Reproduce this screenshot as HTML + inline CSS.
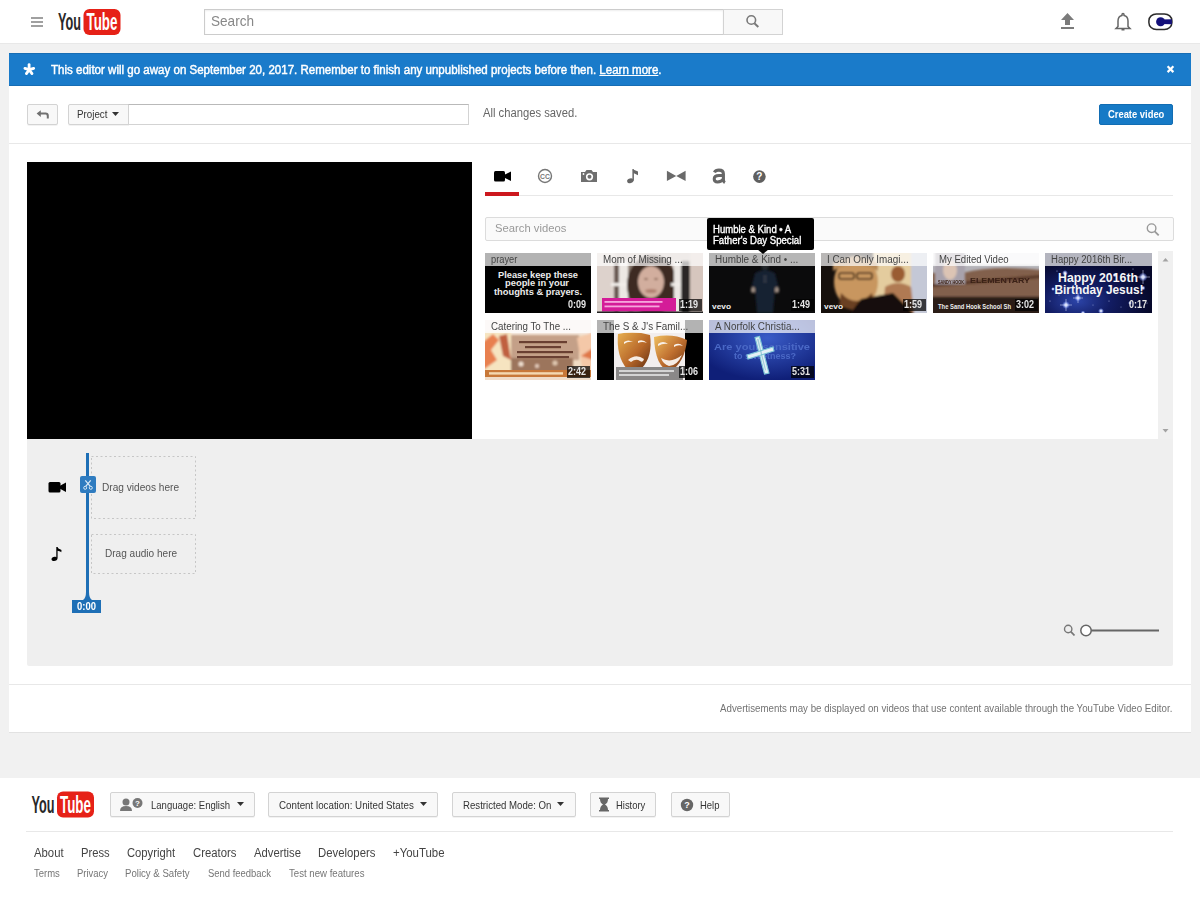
<!DOCTYPE html>
<html><head><meta charset="utf-8">
<style>
*{box-sizing:border-box;margin:0;padding:0}
html,body{width:1200px;height:906px;overflow:hidden}
body{position:relative;background:#f1f1f1;font-family:"Liberation Sans",sans-serif;color:#333}
.abs{position:absolute}
#hdr{left:0;top:0;width:1200px;height:44px;background:#fff;border-bottom:1px solid #e8e8e8}
#banner{left:9px;top:53px;width:1182px;height:33px;background:#1a7bca;border-top:1px solid #176db4;border-bottom:1px solid #176db4}
#panel{left:9px;top:86px;width:1182px;height:647px;background:#fff;border-bottom:1px solid #e2e2e2}
#foot{left:0;top:778px;width:1200px;height:128px;background:#fff}
.btn{position:absolute;background:#f8f8f8;border:1px solid #d3d3d3;border-radius:2px;box-shadow:0 1px 0 rgba(0,0,0,.05)}
.txt{position:absolute;white-space:nowrap;line-height:1;transform-origin:0 0}
svg{position:absolute;overflow:visible}
</style></head>
<body>
<!-- HEADER -->
<div id="hdr" class="abs"></div>
<div class="abs" style="left:31px;top:17px;width:12px;height:1.5px;background:#a0a0a0"></div>
<div class="abs" style="left:31px;top:21px;width:12px;height:1.5px;background:#a0a0a0"></div>
<div class="abs" style="left:31px;top:25px;width:12px;height:1.5px;background:#a0a0a0"></div>
<svg style="left:56px;top:8px" width="68" height="28" viewBox="0 0 68 28">
 <rect x="27.5" y="1" width="37" height="26" rx="6" fill="#e62117"/>
 <text x="2" y="22" font-family="Liberation Sans" font-weight="bold" font-size="23" fill="#282828" textLength="23" lengthAdjust="spacingAndGlyphs">You</text>
 <text x="30.5" y="22" font-family="Liberation Sans" font-weight="bold" font-size="23" fill="#fff" textLength="31" lengthAdjust="spacingAndGlyphs">Tube</text>
</svg>
<div class="abs" style="left:204px;top:9px;width:520px;height:26px;background:#fff;border:1px solid #ccc;box-shadow:inset 0 1px 2px #eee"></div>
<div class="txt" style="left:210.5px;top:14.4px;font-size:14.5px;color:#888;transform:scaleX(.937)">Search</div>
<div class="abs" style="left:723px;top:9px;width:60px;height:26px;background:#f8f8f8;border:1px solid #d3d3d3"></div>
<svg style="left:740px;top:10px" width="24" height="24" viewBox="0 0 24 24">
 <circle cx="11.3" cy="10" r="4.3" fill="none" stroke="#7a7a7a" stroke-width="1.6"/>
 <line x1="14.4" y1="13.2" x2="18.3" y2="17" stroke="#7a7a7a" stroke-width="2"/>
</svg>
<svg style="left:1058px;top:10px" width="20" height="22" viewBox="0 0 20 22">
 <path d="M9.5 3 L16 10 L12 10 L12 15 L7 15 L7 10 L3 10 Z" fill="#7b7b7b"/>
 <rect x="3" y="17" width="13" height="2" fill="#7b7b7b"/>
</svg>
<svg style="left:1112px;top:11px" width="22" height="22" viewBox="0 0 22 22">
 <path d="M11 2.5 a1 1 0 0 1 1 1 v1 c2.6 .6 4 2.8 4 5.5 v5.5 l2 2 H4 l2-2 V10 c0-2.7 1.4-4.9 4-5.5 v-1 a1 1 0 0 1 1-1z" fill="none" stroke="#666" stroke-width="1.5"/>
 <rect x="9.5" y="18" width="3" height="1.5" fill="#666"/>
</svg>
<svg style="left:1146px;top:12px" width="28" height="19" viewBox="0 0 28 19">
 <rect x="2.9" y="1.9" width="23" height="15.6" rx="7.5" ry="6.8" fill="#fff" stroke="#2a2a2a" stroke-width="1.5"/>
 <circle cx="14.6" cy="9.8" r="4.5" fill="#14107a"/>
 <path d="M14.6 7.6 L25.9 7.3 L25.9 12.3 L14.6 12Z" fill="#14107a"/>
</svg>

<!-- BANNER -->
<div id="banner" class="abs"></div>
<svg style="left:18px;top:58px" width="24" height="24" viewBox="0 0 24 24">
 <g stroke="#fff" stroke-width="2.8" stroke-linecap="round">
  <line x1="11.1" y1="11.7" x2="11.1" y2="6.6"/><line x1="11.1" y1="11.7" x2="6.9" y2="10.4"/><line x1="11.1" y1="11.7" x2="15.7" y2="10.4"/><line x1="11.1" y1="11.7" x2="8.4" y2="15.6"/><line x1="11.1" y1="11.7" x2="14" y2="15.6"/>
 </g></svg>
<div class="txt" style="left:51px;top:63.5px;font-size:12.5px;color:#fff;-webkit-text-stroke:.45px #fff;transform:scaleX(.923)">This editor will go away on September 20, 2017. Remember to finish any unpublished projects before then. <span style="text-decoration:underline">Learn more</span>.</div>
<svg style="left:1160px;top:60px" width="20" height="20" viewBox="0 0 20 20">
 <g stroke="#fff" stroke-width="2.2"><line x1="7.6" y1="6.3" x2="13.4" y2="12.1"/><line x1="13.4" y1="6.3" x2="7.6" y2="12.1"/></g></svg>

<!-- PANEL -->
<div id="panel" class="abs"></div>
<div class="btn" style="left:27px;top:104px;width:31px;height:21px"></div>
<svg style="left:35px;top:109px" width="16" height="12" viewBox="0 0 16 12">
 <path d="M1.6 4.6 L5.8 1.3 V3.6 H10.6 Q13.8 3.6 13.8 6.6 V9.4 H11.8 V7 Q11.8 5.6 10.4 5.6 H5.8 V7.9Z" fill="#707070"/>
</svg>
<div class="btn" style="left:68px;top:104px;width:61px;height:21px;border-radius:2px 0 0 2px"></div>
<div class="txt" style="left:77px;top:108.7px;font-size:11px;color:#333;transform:scaleX(.889)">Project</div>
<svg style="left:112px;top:112px" width="8" height="5" viewBox="0 0 8 5"><path d="M0 0H7L3.5 4Z" fill="#333"/></svg>
<div class="abs" style="left:128px;top:104px;width:341px;height:21px;background:#fff;border:1px solid #d3d3d3;border-top-color:#b9b9b9"></div>
<div class="txt" style="left:482.5px;top:107.3px;font-size:12px;color:#666;transform:scaleX(.936)">All changes saved.</div>
<div class="abs" style="left:1099px;top:104px;width:74px;height:21px;background:#167ac6;border:1px solid #126db3;border-radius:2px"></div>
<div class="txt" style="left:1107.5px;top:109.4px;font-size:10.5px;font-weight:bold;color:#fff;transform:scaleX(.894)">Create video</div>
<div class="abs" style="left:9px;top:143px;width:1182px;height:1px;background:#e8e8e8"></div>
<!-- EDITOR -->
<div class="abs" style="left:27px;top:162px;width:445px;height:276.5px;background:#000"></div>
<!-- tabs -->
<svg style="left:492px;top:169px" width="22" height="15" viewBox="0 0 22 15">
 <rect x="2" y="2" width="11" height="10.5" rx="1.5" fill="#000"/>
 <path d="M12 6 L19 2.5 L19 12 L12 8.5Z" fill="#000"/>
</svg>
<svg style="left:536px;top:167px" width="18" height="18" viewBox="0 0 18 18">
 <circle cx="9" cy="9" r="6.5" fill="none" stroke="#777" stroke-width="1.4"/>
 <text x="9" y="11.6" font-family="Liberation Sans" font-weight="bold" font-size="6.8" fill="#777" text-anchor="middle">CC</text>
</svg>
<svg style="left:579px;top:167px" width="20" height="17" viewBox="0 0 20 17">
 <path d="M2 5 H6 L7.5 3 H12.5 L14 5 H18 V15 H2Z" fill="#6f6f6f"/>
 <circle cx="10.5" cy="9.8" r="3.6" fill="#fff"/>
 <circle cx="10.5" cy="9.8" r="2" fill="#6f6f6f"/>
 <circle cx="4.5" cy="7" r="0.9" fill="#fff"/>
</svg>
<svg style="left:624px;top:167px" width="18" height="18" viewBox="0 0 18 18">
 <rect x="8.4" y="2.2" width="1.5" height="11.5" fill="#666"/>
 <path d="M8.6 2.2 L14 4.4 L14 8.2 L9.4 5.9Z" fill="#666"/>
 <ellipse cx="6.3" cy="13.8" rx="3.2" ry="2.3" transform="rotate(-15 6.3 13.8)" fill="#666"/>
</svg>
<svg style="left:665px;top:168px" width="22" height="16" viewBox="0 0 22 16">
 <path d="M1.9 2.75 L11.25 7.9 L1.9 13Z M20.6 2.75 L11.25 7.9 L20.6 13Z" fill="#6a6a6a"/>
</svg>
<svg style="left:711px;top:167px" width="17" height="18" viewBox="0 0 17 18">
 <path d="M3.4 5.4 Q4.6 3.1 7.9 3.1 Q12.4 3.1 12.4 7 V13 Q12.4 14.8 13.9 15.7" fill="none" stroke="#676767" stroke-width="3.1"/>
 <path d="M12.4 8.6 H8 Q3.2 8.6 3.2 12.1 Q3.2 15 6.5 15 Q10.5 15 12.4 12.2" fill="none" stroke="#676767" stroke-width="3"/>
</svg>
<svg style="left:752px;top:170px" width="15" height="15" viewBox="0 0 15 15">
 <circle cx="7.4" cy="6.6" r="6.3" fill="#5f5f5f"/>
 <text x="7.4" y="10.2" font-family="Liberation Sans" font-weight="bold" font-size="10" fill="#fff" text-anchor="middle">?</text>
</svg>
<div class="abs" style="left:485px;top:195px;width:688px;height:1px;background:#e8e8e8"></div>
<div class="abs" style="left:485px;top:192px;width:34px;height:4px;background:#cc181e"></div>
<!-- search videos -->
<div class="abs" style="left:485px;top:217px;width:689px;height:24px;background:#fafafa;border:1px solid #dcdcdc;border-radius:2px"></div>
<div class="txt" style="left:494.5px;top:222.9px;font-size:11.5px;color:#999;transform:scaleX(.978)">Search videos</div>
<svg style="left:1142px;top:219px" width="22" height="22" viewBox="0 0 22 22">
 <circle cx="9.6" cy="9.2" r="4.3" fill="none" stroke="#999" stroke-width="1.4"/>
 <line x1="12.7" y1="12.3" x2="16.7" y2="16.3" stroke="#999" stroke-width="1.8"/>
</svg>
<!-- scrollbar -->
<div class="abs" style="left:1158px;top:251px;width:15px;height:188px;background:#f0f0f0"></div>
<svg style="left:1158px;top:251px" width="15" height="188" viewBox="0 0 15 188">
 <path d="M4.5 10.5 L7.5 7 L10.5 10.5Z" fill="#a3a3a3"/>
 <path d="M4.5 178 L7.5 181.5 L10.5 178Z" fill="#a3a3a3"/>
</svg>
<!-- THUMBNAILS -->
<style>svg.th{overflow:hidden}</style>
<svg style="left:0;top:0" width="0" height="0"><defs>
 <filter id="b1" x="-5%" y="-5%" width="110%" height="110%"><feGaussianBlur stdDeviation="0.9"/></filter>
 <filter id="b2" x="-5%" y="-5%" width="110%" height="110%"><feGaussianBlur stdDeviation="1.6"/></filter>
 <filter id="b05"><feGaussianBlur stdDeviation="0.45"/></filter>
 <radialGradient id="sky" cx="30%" cy="80%" r="70%"><stop offset="0" stop-color="#2c44a8"/><stop offset=".45" stop-color="#121c62"/><stop offset="1" stop-color="#06082a"/></radialGradient>
 <radialGradient id="bl" cx="55%" cy="30%" r="70%"><stop offset="0" stop-color="#3a5cc8"/><stop offset="1" stop-color="#0f1f78"/></radialGradient>
 <radialGradient id="star"><stop offset="0" stop-color="#fff"/><stop offset=".35" stop-color="#c8d4ff" stop-opacity=".9"/><stop offset="1" stop-color="#6080ff" stop-opacity="0"/></radialGradient>
</defs></svg>
<svg class="th" style="left:485px;top:253px" width="106" height="60" viewBox="0 0 106 60">
 <rect width="106" height="60" fill="#000"/>
 <g font-family="Liberation Sans" font-weight="bold" font-size="8.6" fill="#ececec" text-anchor="middle">
  <text x="53" y="24.5" textLength="80" lengthAdjust="spacingAndGlyphs">Please keep these</text>
  <text x="52" y="33" textLength="64" lengthAdjust="spacingAndGlyphs">people in your</text>
  <text x="53" y="41.5" textLength="88" lengthAdjust="spacingAndGlyphs">thoughts &amp; prayers.</text>
 </g>
</svg>
<svg class="th" style="left:597px;top:253px" width="106" height="60" viewBox="0 0 106 60">
 <rect width="106" height="60" fill="#c9bcb6"/>
 <g filter="url(#b1)">
 <rect x="-2" y="-2" width="20" height="64" fill="#ddd2cc"/>
 <rect x="17" y="8" width="5" height="52" fill="#6a5a52"/>
 <rect x="22" y="8" width="9" height="52" fill="#ece8e4"/>
 <rect x="14" y="30" width="18" height="3" fill="#f2eeea"/>
 <rect x="31" y="8" width="5" height="52" fill="#8a7a70"/>
 <ellipse cx="55" cy="32" rx="25" ry="30" fill="#3c2a22"/>
 <ellipse cx="54" cy="29" rx="13" ry="16" fill="#d2ae9e"/>
 <ellipse cx="54" cy="38" rx="6" ry="2" fill="#b08070"/>
 <ellipse cx="49" cy="26" rx="2" ry="1" fill="#8a6a5a"/><ellipse cx="59" cy="26" rx="2" ry="1" fill="#8a6a5a"/>
 <rect x="77" y="8" width="7" height="52" fill="#ebe7e3"/>
 <rect x="74" y="30" width="14" height="3" fill="#f0ece8"/>
 <rect x="84" y="8" width="9" height="52" fill="#2c2626"/>
 <rect x="93" y="-2" width="15" height="64" fill="#d6c6be"/>
 </g>
 <rect x="5" y="45" width="74" height="13.5" fill="#d41c98"/>
 <g filter="url(#b05)" fill="#f6a6dc">
 <rect x="7.5" y="48" width="58" height="1.8"/>
 <rect x="7.5" y="52.5" width="55" height="1.8"/>
 </g>
 <rect x="0" y="58.5" width="106" height="1.5" fill="#222"/>
</svg>
<svg class="th" style="left:709px;top:253px" width="106" height="60" viewBox="0 0 106 60">
 <rect width="106" height="60" fill="#0b0b0c"/>
 <g filter="url(#b1)">
 <path d="M46 20 Q56 14 66 20 L70 36 L66 38 L64 60 L48 60 L46 38 L42 36Z" fill="#182030"/>
 <circle cx="56" cy="13" r="4" fill="#22252c"/>
 <ellipse cx="44" cy="37" rx="2.2" ry="3" fill="#9a8a80"/>
 <ellipse cx="68" cy="37" rx="2.2" ry="3" fill="#9a8a80"/>
 <rect x="54" y="22" width="4" height="8" fill="#2a3040"/>
 </g>
 <text x="3" y="56" font-family="Liberation Sans" font-weight="bold" font-size="7.5" fill="#f0f0f0" textLength="19" lengthAdjust="spacingAndGlyphs">vevo</text>
</svg>
<svg class="th" style="left:821px;top:253px" width="106" height="60" viewBox="0 0 106 60">
 <rect width="106" height="60" fill="#16100c"/>
 <g filter="url(#b1)">
 <rect x="52" y="-2" width="44" height="50" fill="#e4cc9e"/>
 <rect x="90" y="-2" width="18" height="64" fill="#c4c8d6"/>
 <ellipse cx="77" cy="21" rx="7" ry="8" fill="#9a5c30"/>
 <path d="M64 34 Q77 26 90 34 L93 60 L62 60Z" fill="#b07a52"/>
 <ellipse cx="35" cy="29" rx="22" ry="26" fill="#c8965e"/>
 <path d="M12 18 Q35 4 57 18 L57 10 Q35 -2 12 10Z" fill="#b88a58"/>
 <rect x="18" y="20" width="15" height="6" rx="2" fill="none" stroke="#3a2414" stroke-width="1.6"/>
 <rect x="36" y="20" width="15" height="6" rx="2" fill="none" stroke="#3a2414" stroke-width="1.6"/>
 <path d="M20 40 Q35 56 51 40 L53 52 Q35 62 18 52Z" fill="#6a4020"/>
 <path d="M28 62 L40 46 L72 40 L94 62Z" fill="#14100c"/>
 </g>
 <text x="3" y="56" font-family="Liberation Sans" font-weight="bold" font-size="7.5" fill="#f0f0f0" textLength="19" lengthAdjust="spacingAndGlyphs">vevo</text>
</svg>
<svg class="th" style="left:933px;top:253px" width="106" height="60" viewBox="0 0 106 60">
 <rect width="106" height="60" fill="#82604c"/>
 <g filter="url(#b1)">
 <rect x="-2" y="-2" width="110" height="16" fill="#eeeef0"/>
 <path d="M-2 12 L108 12 L108 17 Q60 12 30 20 L-2 20Z" fill="#b4b2b8"/>
 <path d="M-2 31 L108 22 L108 25 L-2 34Z" fill="#5a3a2a"/>
 <rect x="2" y="-2" width="30" height="33" fill="#a8a2ac"/>
 <ellipse cx="17" cy="17" rx="7" ry="10" fill="#dcc4b4"/>
 <rect x="-2" y="44" width="110" height="18" fill="#2c1c16"/>
 </g>
 <g filter="url(#b05)">
 <text x="5" y="31" font-family="Liberation Sans" font-weight="bold" font-size="5" fill="#3a2015" textLength="26" lengthAdjust="spacingAndGlyphs">SANDY HOOK</text>
 <text x="37" y="30" font-family="Liberation Sans" font-weight="bold" font-size="6.5" fill="#3a2015" textLength="60" lengthAdjust="spacingAndGlyphs">ELEMENTARY</text>
 </g>
 <text x="5" y="56" font-family="Liberation Sans" font-weight="bold" font-size="7" fill="#ececec" textLength="73" lengthAdjust="spacingAndGlyphs">The Sand Hook School Sh</text>
</svg>
<svg class="th" style="left:1045px;top:253px" width="107" height="60" viewBox="0 0 107 60">
 <rect width="107" height="60" fill="url(#sky)"/>
 <g fill="#b8c4f0" opacity=".8">
  <circle cx="12" cy="18" r=".6"/><circle cx="30" cy="24" r=".5"/><circle cx="88" cy="16" r=".6"/><circle cx="64" cy="48" r=".6"/><circle cx="76" cy="54" r=".5"/><circle cx="5" cy="48" r=".6"/><circle cx="48" cy="52" r=".5"/><circle cx="102" cy="50" r=".6"/><circle cx="90" cy="40" r=".5"/><circle cx="14" cy="42" r=".5"/>
 </g>
 <g fill="url(#star)">
  <circle cx="21" cy="52" r="4"/><circle cx="33" cy="45" r="3.5"/><circle cx="98" cy="24" r="4.5"/><circle cx="98" cy="35" r="2.5"/><circle cx="20" cy="20" r="3"/><circle cx="56" cy="58" r="3"/><circle cx="38" cy="60" r="2.5"/><circle cx="85" cy="50" r="2"/><circle cx="8" cy="36" r="2"/><circle cx="70" cy="22" r="2.5"/>
 </g>
 <g stroke="#dfe6ff" stroke-width=".6" opacity=".85">
  <path d="M21 46 V58 M15 52 H27"/><path d="M98 17 V31 M91 24 H105"/><path d="M33 40 V50 M28 45 H38"/>
 </g>
 <g font-family="Liberation Sans" font-weight="bold" font-size="12" fill="#f6f6f6" text-anchor="middle">
  <text x="53" y="28.5" textLength="80" lengthAdjust="spacingAndGlyphs">Happy 2016th</text>
  <text x="54" y="40.5" textLength="89" lengthAdjust="spacingAndGlyphs">Birthday Jesus!</text>
 </g>
</svg>
<svg class="th" style="left:485px;top:320px" width="106" height="60" viewBox="0 0 106 60">
 <rect width="106" height="60" fill="#f0dcc4"/>
 <g filter="url(#b1)">
 <rect x="-2" y="-2" width="110" height="16" fill="#f6ece6"/>
 <rect x="-2" y="12" width="28" height="42" fill="#f6e4c0"/>
 <path d="M-2 22 L8 14 L14 20 L6 30 L12 40 L-2 50Z" fill="#e88050"/>
 <path d="M14 16 L22 14 L26 40 L18 36Z" fill="#c06040"/>
 <rect x="26" y="15" width="68" height="25" fill="#c4a088"/>
 <rect x="26" y="38" width="62" height="14" fill="#9c745c"/>
 <circle cx="36" cy="44" r="2.5" fill="#f0e0d0"/><circle cx="52" cy="46" r="2" fill="#e8d0c0"/><circle cx="70" cy="43" r="2.5" fill="#e0c8b0"/>
 <path d="M92 18 L108 12 L108 52 L98 52 L94 30Z" fill="#f4c8a8"/>
 <path d="M96 36 L108 28 L108 40Z" fill="#e07848"/>
 <rect x="-2" y="57" width="110" height="5" fill="#f0dcc8"/>
 </g>
 <g filter="url(#b05)" fill="#6a4030">
 <rect x="34" y="21" width="48" height="2.2"/>
 <rect x="40" y="26" width="36" height="2.2"/>
 <rect x="32" y="31" width="56" height="2.2"/>
 <rect x="32" y="36" width="52" height="2.2"/>
 </g>
 <rect x="0" y="50" width="106" height="7" fill="#c87838"/>
 <rect x="4" y="52.2" width="74" height="2.4" fill="#f4d8b0" filter="url(#b05)"/>
</svg>
<svg class="th" style="left:597px;top:320px" width="106" height="60" viewBox="0 0 106 60">
 <defs>
  <linearGradient id="mk1" x1="0" y1="0" x2="1" y2="1"><stop offset="0" stop-color="#e8b050"/><stop offset=".55" stop-color="#b8682a"/><stop offset="1" stop-color="#5a2a10"/></linearGradient>
  <linearGradient id="mk2" x1="0" y1="0" x2="1" y2="1"><stop offset="0" stop-color="#f0c060"/><stop offset=".5" stop-color="#c07030"/><stop offset="1" stop-color="#6a3012"/></linearGradient>
 </defs>
 <rect width="106" height="60" fill="#000"/>
 <rect x="17" y="0" width="71" height="60" fill="#f2eeee"/>
 <g filter="url(#b05)">
 <path d="M21 14 Q37 10 53 15 Q56 36 45 48 Q37 54 30 49 Q19 36 21 14Z" fill="url(#mk1)"/>
 <path d="M27 22 Q31 19 36 22 Q31 21 27 24Z" fill="#f8f0e8"/>
 <path d="M41 21 Q46 19 50 23 Q45 21 41 23Z" fill="#f8f0e8"/>
 <path d="M31 40 Q39 33 47 39 Q46 43 43 41 Q39 38 34 42Z" fill="#f6ece4"/>
 <path d="M57 17 Q75 13 90 20 Q88 42 73 52 Q58 47 57 17Z" fill="url(#mk2)"/>
 <path d="M61 24 Q66 20 71 24 Q66 23 61 26Z" fill="#f8f0e8"/>
 <path d="M77 25 Q82 22 86 26 Q81 24 77 27Z" fill="#f8f0e8"/>
 <path d="M64 38 Q74 44 85 35 Q80 46 72 46 Q66 44 64 38Z" fill="#f6ece4"/>
 </g>
 <rect x="19" y="47" width="67" height="13" fill="#8a8888"/>
 <g filter="url(#b05)" fill="#d4d4d4">
 <rect x="22" y="50" width="55" height="2"/>
 <rect x="22" y="54" width="50" height="2"/>
 </g>
</svg>
<svg class="th" style="left:709px;top:320px" width="106" height="60" viewBox="0 0 106 60">
 <rect width="106" height="60" fill="url(#bl)"/>
 <g font-family="Liberation Sans" font-weight="bold" font-size="9.5" fill="#4a68c6" text-anchor="middle" filter="url(#b05)">
  <text x="53" y="30" textLength="96" lengthAdjust="spacingAndGlyphs">Are your   sensitive</text>
  <text x="56" y="39" textLength="62" lengthAdjust="spacingAndGlyphs">to sweetness?</text>
 </g>
 <g filter="url(#b05)" fill="#e4f0f6" stroke="#80c8d8" stroke-width="1.1">
 <path d="M46 17.5 L50.5 16.5 L60 53 L55.5 54Z"/>
 <path d="M38 35 L64 27 L65 31 L39 39Z"/>
 </g>
 <path d="M48 19 L49.5 18.8 L57 50 L56 50.5Z" fill="#60b0c0" opacity=".5"/>
</svg>
<!-- title bars and durations -->
<style>
.tb{position:absolute;height:13px;background:rgba(255,255,255,.7)}
.tt{position:absolute;font-size:10px;line-height:10px;color:#444;white-space:nowrap;transform-origin:0 0}
.bd{position:absolute;height:12px;background:rgba(0,0,0,.72)}
.du{position:absolute;font-size:10px;line-height:10px;font-weight:bold;color:#e6e6e6;white-space:nowrap;transform-origin:0 0;transform:scaleX(.9)}
</style>
<div class="tb" style="left:485px;top:253px;width:106px"></div>
<div class="tb" style="left:597px;top:253px;width:106px"></div>
<div class="tb" style="left:709px;top:253px;width:106px"></div>
<div class="tb" style="left:821px;top:253px;width:106px"></div>
<div class="tb" style="left:933px;top:253px;width:106px"></div>
<div class="tb" style="left:1045px;top:253px;width:107px"></div>
<div class="tb" style="left:485px;top:320px;width:106px"></div>
<div class="tb" style="left:597px;top:320px;width:106px"></div>
<div class="tb" style="left:709px;top:320px;width:106px"></div>
<div class="tt" style="left:490.6px;top:254.8px;transform:scaleX(0.927)">prayer</div>
<div class="tt" style="left:602.6px;top:254.8px;transform:scaleX(0.983)">Mom of Missing ...</div>
<div class="tt" style="left:714.6px;top:254.8px;transform:scaleX(0.99)">Humble &amp; Kind • ...</div>
<div class="tt" style="left:826.6px;top:254.8px;transform:scaleX(0.987)">I Can Only Imagi...</div>
<div class="tt" style="left:938.6px;top:254.8px;transform:scaleX(0.958)">My Edited Video</div>
<div class="tt" style="left:1050.6px;top:254.8px;transform:scaleX(0.955)">Happy 2016th Bir...</div>
<div class="tt" style="left:490.6px;top:321.8px;transform:scaleX(0.977)">Catering To The ...</div>
<div class="tt" style="left:602.6px;top:321.8px;transform:scaleX(0.986)">The S &amp; J's Famil...</div>
<div class="tt" style="left:714.6px;top:321.8px;transform:scaleX(0.989)">A Norfolk Christia...</div>
<div class="du" style="left:568.3px;top:300.2px">0:09</div>
<div class="bd" style="left:678.8px;top:299px;width:23.2px"></div>
<div class="du" style="left:680.3px;top:300.2px">1:19</div>
<div class="bd" style="left:790.8px;top:299px;width:23.2px"></div>
<div class="du" style="left:792.3px;top:300.2px">1:49</div>
<div class="bd" style="left:902.8px;top:299px;width:23.2px"></div>
<div class="du" style="left:904.3px;top:300.2px">1:59</div>
<div class="bd" style="left:1014.8px;top:299px;width:23.2px"></div>
<div class="du" style="left:1016.3px;top:300.2px">3:02</div>
<div class="du" style="left:1129.3px;top:300.2px">0:17</div>
<div class="bd" style="left:566.8px;top:366px;width:23.2px"></div>
<div class="du" style="left:568.3px;top:367.2px">2:42</div>
<div class="bd" style="left:678.8px;top:366px;width:23.2px"></div>
<div class="du" style="left:680.3px;top:367.2px">1:06</div>
<div class="bd" style="left:790.8px;top:366px;width:23.2px"></div>
<div class="du" style="left:792.3px;top:367.2px">5:31</div>
<!-- tooltip -->
<div class="abs" style="left:707px;top:218px;width:107px;height:32px;background:#000;border-radius:2px"></div>
<svg style="left:757px;top:249px" width="12" height="6" viewBox="0 0 12 6"><path d="M0 0 L12 0 L6 5Z" fill="#000"/></svg>
<div class="txt" style="left:712.5px;top:224.6px;font-size:10px;color:#fff;-webkit-text-stroke:.35px #fff;transform:scaleX(.955)">Humble &amp; Kind • A</div>
<div class="txt" style="left:712.5px;top:235.6px;font-size:10px;color:#fff;-webkit-text-stroke:.35px #fff;transform:scaleX(.96)">Father's Day Special</div>
<!-- TIMELINE -->
<div class="abs" style="left:27px;top:439px;width:1146px;height:227px;background:#efefef;border-radius:0 0 2px 2px"></div>
<svg style="left:46px;top:478px" width="22" height="16" viewBox="0 0 22 16">
 <rect x="2.5" y="4" width="12" height="10.5" rx="1.5" fill="#000"/>
 <path d="M13.5 8 L20 4.5 L20 14 L13.5 10.5Z" fill="#000"/>
</svg>
<svg style="left:90px;top:456px" width="106" height="63" viewBox="0 0 106 63"><rect x="1.5" y="0.5" width="104" height="62" fill="none" stroke="#c6c6c6" stroke-width="1" stroke-dasharray="2 2.5"/></svg>
<div class="txt" style="left:102.2px;top:481.7px;font-size:11px;color:#555;transform:scaleX(.92)">Drag videos here</div>
<svg style="left:90px;top:534px" width="106" height="40" viewBox="0 0 106 40"><rect x="1.5" y="0.5" width="104" height="39" fill="none" stroke="#c6c6c6" stroke-width="1" stroke-dasharray="2 2.5"/></svg>
<div class="txt" style="left:104.5px;top:548.4px;font-size:11px;color:#555;transform:scaleX(.914)">Drag audio here</div>
<svg style="left:48px;top:545px" width="18" height="18" viewBox="0 0 18 18">
 <path d="M8.3 2 L9.6 2 C9.8 3.6 11.6 4 13.5 5 L13.3 7.2 C11.8 6.3 10.8 6.1 9.6 5.8 L9.6 13 C9.6 14.7 8 16 6 16 C4.5 16 3.5 15.3 3.5 14.2 C3.5 12.8 5 11.8 6.6 11.8 C7.3 11.8 7.8 11.9 8.3 12.2Z" fill="#000"/>
</svg>
<div class="abs" style="left:86px;top:453px;width:3px;height:147px;background:#1e6fb6"></div>
<div class="abs" style="left:80px;top:476px;width:16px;height:17px;background:#2f7cc0;border-radius:2px"></div>
<svg style="left:80px;top:476px" width="16" height="17" viewBox="0 0 16 17">
 <path d="M5.3 4.3 L10.3 10.3 M10.7 4.3 L5.7 10.3" stroke="#d6e8f6" stroke-width="1.3"/>
 <circle cx="5.2" cy="11.8" r="1.5" fill="none" stroke="#d6e8f6" stroke-width="1"/>
 <circle cx="10.8" cy="11.8" r="1.5" fill="none" stroke="#d6e8f6" stroke-width="1"/>
</svg>
<svg style="left:82px;top:592px" width="12" height="9" viewBox="0 0 12 9"><path d="M4 0 L7 0 Q7 6 10 8 L1 8 Q4 6 4 0Z" fill="#1e6fb6"/></svg>
<div class="abs" style="left:72px;top:600px;width:29px;height:13px;background:#1e6fb6"></div>
<div class="txt" style="left:76.5px;top:601.8px;font-size:10px;font-weight:bold;color:#fff;transform:scaleX(.944)">0:00</div>
<svg style="left:1060px;top:620px" width="104" height="20" viewBox="0 0 104 20">
 <circle cx="8.2" cy="9" r="3.7" fill="none" stroke="#777" stroke-width="1.4"/>
 <line x1="10.8" y1="11.6" x2="14.5" y2="15.5" stroke="#777" stroke-width="1.8"/>
 <line x1="31" y1="10.5" x2="99" y2="10.5" stroke="#666" stroke-width="2"/>
 <circle cx="26" cy="10.5" r="5.2" fill="#fff" stroke="#666" stroke-width="1.5"/>
</svg>
<div class="abs" style="left:9px;top:684px;width:1182px;height:1px;background:#e8e8e8"></div>
<div class="txt" style="left:719.5px;top:703.7px;font-size:10px;color:#737373;transform:scaleX(.971)">Advertisements may be displayed on videos that use content available through the YouTube Video Editor.</div>

<!-- FOOTER -->
<div id="foot" class="abs"></div>
<svg style="left:30px;top:790px" width="68" height="29" viewBox="0 0 68 29">
 <rect x="27" y="1.5" width="37" height="26" rx="6" fill="#e62117"/>
 <text x="1.5" y="23" font-family="Liberation Sans" font-weight="bold" font-size="24" fill="#282828" textLength="23" lengthAdjust="spacingAndGlyphs">You</text>
 <text x="30" y="23" font-family="Liberation Sans" font-weight="bold" font-size="24" fill="#fff" textLength="31" lengthAdjust="spacingAndGlyphs">Tube</text>
</svg>
<div class="btn" style="left:110px;top:792px;width:145px;height:25px"></div>
<svg style="left:118px;top:796px" width="28" height="18" viewBox="0 0 28 18">
 <circle cx="8" cy="6" r="3.5" fill="#777"/>
 <path d="M2 15 Q2 10 8 10 Q14 10 14 15Z" fill="#777"/>
 <circle cx="19.5" cy="7" r="5" fill="#777"/>
 <text x="19.5" y="10" font-family="Liberation Sans" font-weight="bold" font-size="8" fill="#fff" text-anchor="middle">?</text>
</svg>
<div class="txt" style="left:150.8px;top:799.6px;font-size:10.5px;color:#333;transform:scaleX(.909)">Language: English</div>
<svg style="left:237px;top:802px" width="8" height="5" viewBox="0 0 8 5"><path d="M0 0H7L3.5 4Z" fill="#333"/></svg>
<div class="btn" style="left:268px;top:792px;width:170px;height:25px"></div>
<div class="txt" style="left:279px;top:799.6px;font-size:10.5px;color:#333;transform:scaleX(.931)">Content location: United States</div>
<svg style="left:420px;top:802px" width="8" height="5" viewBox="0 0 8 5"><path d="M0 0H7L3.5 4Z" fill="#333"/></svg>
<div class="btn" style="left:452px;top:792px;width:124px;height:25px"></div>
<div class="txt" style="left:462.5px;top:799.6px;font-size:10.5px;color:#333;transform:scaleX(.918)">Restricted Mode: On</div>
<svg style="left:557px;top:802px" width="8" height="5" viewBox="0 0 8 5"><path d="M0 0H7L3.5 4Z" fill="#333"/></svg>
<div class="btn" style="left:590px;top:792px;width:66px;height:25px"></div>
<svg style="left:597px;top:796px" width="14" height="17" viewBox="0 0 14 17">
 <path d="M2 1.5 H12 V3 H11 Q11 7 8 8.5 Q11 10 11 14 H12 V15.5 H2 V14 H3 Q3 10 6 8.5 Q3 7 3 3 H2Z" fill="#666"/>
</svg>
<div class="txt" style="left:615.5px;top:799.6px;font-size:10.5px;color:#333;transform:scaleX(.898)">History</div>
<div class="btn" style="left:671px;top:792px;width:59px;height:25px"></div>
<svg style="left:679px;top:797px" width="16" height="16" viewBox="0 0 16 16">
 <circle cx="8" cy="8" r="6.2" fill="#666"/>
 <text x="8" y="11.3" font-family="Liberation Sans" font-weight="bold" font-size="9" fill="#fff" text-anchor="middle">?</text>
</svg>
<div class="txt" style="left:699.5px;top:799.6px;font-size:10.5px;color:#333;transform:scaleX(.901)">Help</div>
<div class="abs" style="left:26px;top:831px;width:1147px;height:1px;background:#e8e8e8"></div>
<div class="txt" style="left:33.8px;top:847px;font-size:12px;color:#444;transform:scaleX(0.943)">About</div>
<div class="txt" style="left:81px;top:847px;font-size:12px;color:#444;transform:scaleX(0.936)">Press</div>
<div class="txt" style="left:127.3px;top:847px;font-size:12px;color:#444;transform:scaleX(0.936)">Copyright</div>
<div class="txt" style="left:193.4px;top:847px;font-size:12px;color:#444;transform:scaleX(0.943)">Creators</div>
<div class="txt" style="left:253.5px;top:847px;font-size:12px;color:#444;transform:scaleX(0.939)">Advertise</div>
<div class="txt" style="left:318.4px;top:847px;font-size:12px;color:#444;transform:scaleX(0.946)">Developers</div>
<div class="txt" style="left:393.4px;top:847px;font-size:12px;color:#444;transform:scaleX(0.951)">+YouTube</div>
<div class="txt" style="left:34.3px;top:869.3px;font-size:10px;color:#767676;transform:scaleX(0.948)">Terms</div>
<div class="txt" style="left:77px;top:869.3px;font-size:10px;color:#767676;transform:scaleX(0.946)">Privacy</div>
<div class="txt" style="left:125.4px;top:869.3px;font-size:10px;color:#767676;transform:scaleX(0.961)">Policy &amp; Safety</div>
<div class="txt" style="left:207.6px;top:869.3px;font-size:10px;color:#767676;transform:scaleX(0.944)">Send feedback</div>
<div class="txt" style="left:289px;top:869.3px;font-size:10px;color:#767676;transform:scaleX(0.963)">Test new features</div>
</body></html>
